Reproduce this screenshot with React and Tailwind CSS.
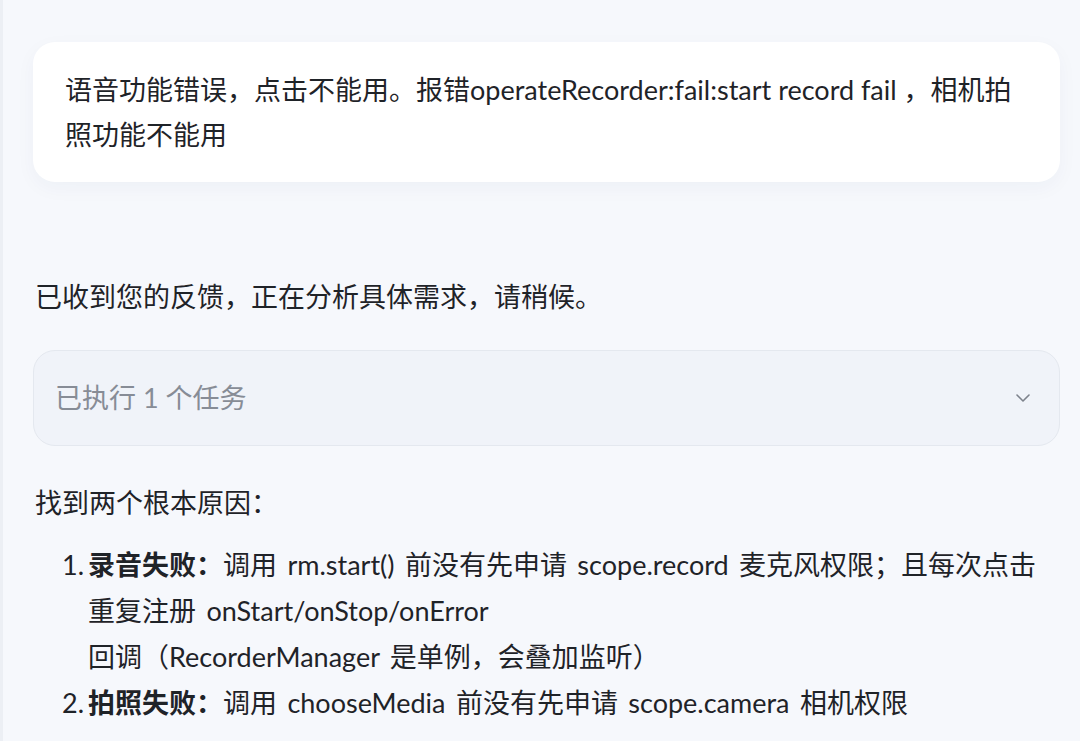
import React from 'react';
import { ChevronDown } from 'lucide-react';

const font = { fontFamily: 'Lato, "Noto Sans CJK SC", sans-serif' };

const ListItem = ({ num, children }) => (
  <div className="flex">
    <span className="w-[26px] shrink-0">{num}</span>
    <div>{children}</div>
  </div>
);

export default function App() {
  return (
    <div
      style={font}
      className="w-[1080px] h-[741px] overflow-hidden bg-[#f6f8fc] border-l-[3px] border-[#eceff4] text-[#1f2328] text-[27px] leading-[46px]"
    >
      <div className="pl-[30px] pr-[20px] pt-[42px]">
        <div className="bg-white rounded-[22px] px-[32px] py-[25px] leading-[45px] shadow-[0_6px_20px_rgba(30,50,90,0.04)]">
          语音功能错误，点击不能用。报错operateRecorder:fail:start record fail ，相机拍照功能不能用
        </div>

        <p className="mt-[92px] ml-[2px]">已收到您的反馈，正在分析具体需求，请稍候。</p>

        <div className="mt-[30px] h-[96px] rounded-[22px] bg-[#f0f3f9] border border-[#e4e8ef] flex items-center justify-between pl-[21px] pr-[24px]">
          <span className="text-[#878c96]">已执行 1 个任务</span>
          <ChevronDown size={24} strokeWidth={1.6} className="text-[#7d828c]" />
        </div>

        <p className="mt-[34px] ml-[2px]">找到两个根本原因：</p>

        <div className="mt-[16px] ml-[29px] [word-spacing:3.5px]">
          <ListItem num="1.">
            <b className="font-bold">录音失败：</b>调用 rm.start() 前没有先申请 scope.record 麦克风权限；且每次点击
            <br />
            重复注册 onStart/onStop/onError
            <br />
            回调（RecorderManager 是单例，会叠加监听）
          </ListItem>
          <ListItem num="2.">
            <b className="font-bold">拍照失败：</b>调用 chooseMedia 前没有先申请 scope.camera 相机权限
          </ListItem>
        </div>
      </div>
    </div>
  );
}
